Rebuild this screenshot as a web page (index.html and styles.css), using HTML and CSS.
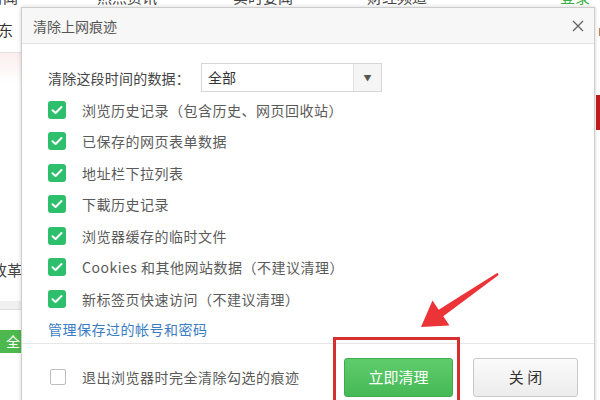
FILE: index.html
```html
<!DOCTYPE html>
<html lang="zh-CN">
<head>
<meta charset="utf-8">
<title>清除上网痕迹</title>
<link rel="stylesheet" href="styles.css">
</head>
<body>
<div class="page">
  <div class="top-strip">
    <span class="frag f1">新闻</span>
    <span class="frag f2">热点资讯</span>
    <span class="frag f3">实时要闻</span>
    <span class="frag f4">财经频道</span>
    <span class="frag f5 green">登录</span>
  </div>

  <div class="left-strip">
    <div class="ls-char">东</div>
    <div class="ls-line"></div>
    <div class="ls-pink"></div>
    <div class="ls-text">改革</div>
    <div class="ls-band"></div>
    <div class="ls-green">全</div>
  </div>

  <div class="dialog">
    <div class="titlebar">
      <span class="title">清除上网痕迹</span>
      <svg class="close" width="12" height="12" viewBox="0 0 12 12"><path d="M1 1 L11 11 M11 1 L1 11" stroke="#666" stroke-width="1.4" fill="none"/></svg>
    </div>
    <div class="body">
      <div class="range-row">
        <span class="range-label">清除这段时间的数据：</span>
        <div class="select">
          <span class="select-value">全部</span>
          <span class="select-arrow">▼</span>
        </div>
      </div>
      <ul class="checklist">
        <li class="item"><span class="cb on"><svg width="18" height="18" viewBox="0 0 18 18"><path d="M4.5 9.2 L7.6 12 L13.5 6" stroke="#fff" stroke-width="2" fill="none" stroke-linecap="round" stroke-linejoin="round"/></svg></span><span class="label">浏览历史记录（包含历史、网页回收站）</span></li>
        <li class="item"><span class="cb on"><svg width="18" height="18" viewBox="0 0 18 18"><path d="M4.5 9.2 L7.6 12 L13.5 6" stroke="#fff" stroke-width="2" fill="none" stroke-linecap="round" stroke-linejoin="round"/></svg></span><span class="label">已保存的网页表单数据</span></li>
        <li class="item"><span class="cb on"><svg width="18" height="18" viewBox="0 0 18 18"><path d="M4.5 9.2 L7.6 12 L13.5 6" stroke="#fff" stroke-width="2" fill="none" stroke-linecap="round" stroke-linejoin="round"/></svg></span><span class="label">地址栏下拉列表</span></li>
        <li class="item"><span class="cb on"><svg width="18" height="18" viewBox="0 0 18 18"><path d="M4.5 9.2 L7.6 12 L13.5 6" stroke="#fff" stroke-width="2" fill="none" stroke-linecap="round" stroke-linejoin="round"/></svg></span><span class="label">下載历史记录</span></li>
        <li class="item"><span class="cb on"><svg width="18" height="18" viewBox="0 0 18 18"><path d="M4.5 9.2 L7.6 12 L13.5 6" stroke="#fff" stroke-width="2" fill="none" stroke-linecap="round" stroke-linejoin="round"/></svg></span><span class="label">浏览器缓存的临时文件</span></li>
        <li class="item"><span class="cb on"><svg width="18" height="18" viewBox="0 0 18 18"><path d="M4.5 9.2 L7.6 12 L13.5 6" stroke="#fff" stroke-width="2" fill="none" stroke-linecap="round" stroke-linejoin="round"/></svg></span><span class="label">Cookies 和其他网站数据（不建议清理）</span></li>
        <li class="item"><span class="cb on"><svg width="18" height="18" viewBox="0 0 18 18"><path d="M4.5 9.2 L7.6 12 L13.5 6" stroke="#fff" stroke-width="2" fill="none" stroke-linecap="round" stroke-linejoin="round"/></svg></span><span class="label">新标签页快速访问（不建议清理）</span></li>
      </ul>
      <a class="manage-link">管理保存过的帐号和密码</a>
    </div>
    <div class="footer">
      <span class="cb off"></span>
      <span class="label">退出浏览器时完全清除勾选的痕迹</span>
      <button class="btn btn-primary">立即清理</button>
      <button class="btn btn-close">关 闭</button>
    </div>
  </div>

  <div class="right-strip">
    <div class="rs-char">r</div>
    <div class="rs-red"></div>
  </div>

  <div class="annot-box"></div>
  <svg class="annot-arrow" width="600" height="400" viewBox="0 0 600 400">
    <polygon points="497.5,272.8 438.7,309.7 432.5,300.6 421,327 449.5,325.4 443.3,316.3 498.6,275" fill="#ec3338"/>
  </svg>
</div>
</body>
</html>
```

FILE: styles.css
```css
* { box-sizing: border-box; }
html, body { margin: 0; padding: 0; }
body {
  width: 600px;
  height: 400px;
  overflow: hidden;
  background: #fff;
  font-family: "Noto Sans CJK SC", "Microsoft YaHei", sans-serif;
  color: #555;
}
.page {
  position: relative;
  width: 600px;
  height: 400px;
  overflow: hidden;
  display: grid;
  grid-template-columns: 21px 574px 5px;
  grid-template-rows: 7px 393px;
}

/* background page fragments */
.top-strip {
  grid-column: 1 / 4;
  grid-row: 1;
  overflow: hidden;
  display: flex;
  align-items: flex-start;
  font-size: 15px;
  line-height: 18px;
  color: #444;
}
.frag { margin-top: -12px; white-space: nowrap; }
.f1 { margin-left: -12px; width: 109px; }
.f2 { width: 136px; }
.f3 { width: 134px; }
.f4 { width: 193px; }
.green { color: #3cb043; }

.left-strip {
  grid-column: 1;
  grid-row: 2;
  overflow: hidden;
  display: flex;
  flex-direction: column;
  font-size: 15px;
  color: #333;
}
.ls-char { margin-top: 13px; margin-left: -2px; line-height: 20px; height: 20px; }
.ls-line { margin-top: 12px; height: 1px; background: #e2e2e2; }
.ls-pink { height: 30px; background: linear-gradient(#fbeeee, #fff); }
.ls-text { margin-top: 177px; margin-left: -8px; line-height: 20px; height: 20px; white-space: nowrap; color: #444; }
.ls-band { margin-top: 21px; height: 9px; background: #f0f0f0; border-bottom: 1px solid #dedede; }
.ls-green {
  margin-top: 20px;
  height: 23px;
  background: #4db84d;
  color: #fff;
  font-size: 14px;
  line-height: 23px;
  padding-left: 6px;
}

.right-strip {
  grid-column: 3;
  grid-row: 2;
  overflow: hidden;
  display: flex;
  flex-direction: column;
  border-left: 1px solid #ececec;
}
.rs-char { margin-top: 14px; margin-left: 2px; font-size: 14px; line-height: 18px; color: #555; }
.rs-red { margin-top: 56px; height: 35px; background: #c01a1a; }

/* dialog */
.dialog {
  grid-column: 2;
  grid-row: 2;
  height: 400px;
  background: #fff;
  border: 1px solid #cdcdcd;
  box-shadow: 0 0 4px rgba(0, 0, 0, 0.18);
  display: flex;
  flex-direction: column;
}
.titlebar {
  height: 36px;
  flex: none;
  background: #f7f7f7;
  border-bottom: 1px solid #e2e2e2;
  display: flex;
  align-items: center;
  justify-content: space-between;
  padding: 0 10px 0 11px;
}
.title { font-size: 14px; color: #555; line-height: 20px; }
.close { display: block; }

.body {
  padding: 19px 0 0 26px;
  flex: none;
}
.range-row {
  display: flex;
  align-items: center;
  height: 29px;
}
.range-label {
  width: 153px;
  font-size: 14px;
  color: #444;
  line-height: 20px;
  letter-spacing: 0.2px;
  white-space: nowrap;
}
.select {
  width: 181px;
  height: 29px;
  border: 1px solid #d6d6d6;
  display: flex;
  align-items: stretch;
  background: #fff;
}
.select-value {
  flex: 1;
  padding-left: 6px;
  font-size: 14px;
  line-height: 27px;
  color: #333;
}
.select-arrow {
  width: 28px;
  border-left: 1px solid #e2e2e2;
  background: #f5f5f5;
  font-size: 8px;
  color: #555;
  display: flex;
  align-items: center;
  justify-content: center;
}

.checklist {
  list-style: none;
  margin: 2px 0 0;
  padding: 0;
}
.item {
  height: 31.5px;
  display: flex;
  align-items: center;
}
.cb {
  flex: none;
  width: 18px;
  height: 18px;
  border-radius: 3px;
  display: block;
}
.cb svg { display: block; }
.cb.on { background: #2dbf6c; }
.cb.off {
  width: 16px;
  height: 16px;
  border: 1px solid #bdbdbd;
  background: #fff;
  border-radius: 2px;
}
.label {
  margin-left: 16px;
  font-size: 14px;
  line-height: 20px;
  letter-spacing: 0.5px;
  color: #5a5a5a;
  white-space: nowrap;
}
.manage-link {
  display: flex;
  align-items: center;
  height: 28px;
  font-size: 14px;
  letter-spacing: 0.5px;
  color: #3b7dc4;
  line-height: 20px;
}

.footer {
  flex: none;
  border-top: 1px solid #e6e6e6;
  display: flex;
  align-items: center;
  padding: 14px 16px 0 28px;
}
.footer .label { margin-left: 16px; }
.btn {
  height: 39px;
  border-radius: 3px;
  font-family: inherit;
  font-size: 15px;
  line-height: 20px;
  padding: 0;
  cursor: pointer;
}
.btn-primary {
  margin-left: auto;
  width: 109px;
  background: linear-gradient(#60cc6c, #45b955);
  border: 1px solid #3dab4e;
  color: #fff;
}
.btn-close {
  margin-left: 20px;
  width: 105px;
  background: linear-gradient(#fbfbfb, #ececec);
  border: 1px solid #c9c9c9;
  color: #333;
}

/* annotations drawn over the screenshot */
.annot-box {
  position: absolute;
  left: 333px;
  top: 337px;
  width: 127px;
  height: 80px;
  border: 3px solid #d6302e;
}
.annot-arrow {
  position: absolute;
  left: 0;
  top: 0;
  pointer-events: none;
}
```
